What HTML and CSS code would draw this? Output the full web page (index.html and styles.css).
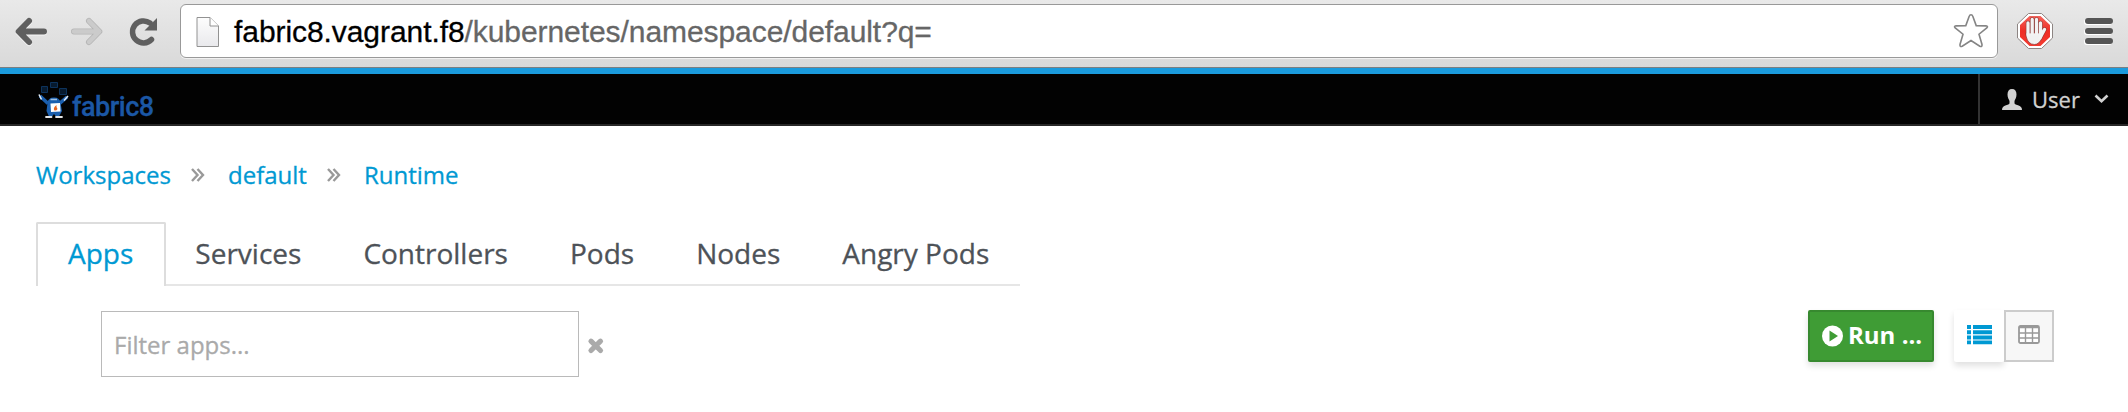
FILE: index.html
```html
<!DOCTYPE html>
<html lang="en">
<head>
<meta charset="utf-8">
<title>fabric8</title>
<link rel="stylesheet" href="styles.css">
</head>
<body>
<div class="browser">
  <svg class="nav-icons" width="180" height="67" viewBox="0 0 180 67" fill="none" stroke-linecap="round" stroke-linejoin="round">
    <path d="M44 31.500H20M29 21 18.700 31.500 29 42" stroke="#f7f7f7" stroke-width="6" transform="translate(0 1)"/>
    <path d="M44 31.500H20M29 21 18.700 31.500 29 42" stroke="#5f5f5f" stroke-width="6"/>
    <path d="M74 31.500H98M89 21 99.300 31.500 89 42" stroke="#b5b5b5" stroke-width="6"/>
    <path d="M74 31.500H98M89 21 99.300 31.500 89 42" stroke="#cbcbcb" stroke-width="4.500"/>
    <path d="M151.500 39.500A11 11 0 1 1 150 23" stroke="#5f5f5f" stroke-width="5.500"/>
    <path d="M157 18V30.500H144.500Z" fill="#5f5f5f"/>
  </svg>
  <div class="omnibox">
    <svg class="page-icon" width="24" height="32" viewBox="0 0 24 32">
      <defs><linearGradient id="paper" x2="0" y2="1"><stop stop-color="#fdfdfd"/><stop offset="1" stop-color="#e9e9ec"/></linearGradient></defs>
      <path d="M1 1.500H14L22.500 10V30.500H1Z" fill="url(#paper)" stroke="#929292"/>
      <path d="M14 1.500V10H22.500" fill="#fff" stroke="#929292"/>
    </svg>
    <div class="url"><span class="host">fabric8.vagrant.f8</span><span class="path">/kubernetes/namespace/default?q=</span></div>
    <svg class="star" width="36" height="36" viewBox="0 0 36 36"><path d="M18 1.800Q19.300 1.800 19.700 3L23.200 12.600 33 12.900Q35.500 13.200 33.800 15L26 21.200 29 31.500Q29.300 34.300 26.800 33.200L18 27.500 9.200 33.200Q6.700 34.300 7 31.500L10 21.200 2.200 15Q.5 13.200 3 12.900L12.800 12.600 16.300 3Q16.700 1.800 18 1.800Z" fill="#fff" stroke="#858585" stroke-width="1.600"/></svg>
  </div>
  <svg class="ext-icons" width="130" height="67" viewBox="0 0 130 67">
    <defs><linearGradient id="red" x2="0" y2="1"><stop stop-color="#f4645c"/><stop offset=".5" stop-color="#ee2d24"/><stop offset="1" stop-color="#f43b31"/></linearGradient></defs>
    <path d="M30.500 13.500H43.500L54.500 24V38L43.500 48.500H30.500L19.500 38V24Z" fill="#fff" stroke="#8d8583"/>
    <path d="M31.500 16H42.500L52 25V37L42.500 46H31.500L22 37V25Z" fill="url(#red)"/>
    <g fill="none" stroke-linecap="round" stroke-linejoin="round">
      <path id="hand" d="M30 35V23M34.200 32V19.500M38.500 32V19.500M42.500 34V23M46.500 29.500 42 38" stroke="#8b3430" stroke-width="4.400"/>
      <path d="M28.300 33H44.500L44 38Q41 44.500 36.500 44.500 30 44.500 28.300 37Z" fill="#f1f1f1" stroke="#8b3430" stroke-width=".7"/>
      <path d="M30 35V23M34.200 34V19.500M38.500 34V19.500M42.500 35V23M46.500 29.500 42 38" stroke="#f3f3f3" stroke-width="3.300"/>
    </g>
    <path d="M89 22H111M89 32H111M89 42H111" stroke="#fff" stroke-width="6" stroke-linecap="round"/>
    <path d="M90 21H112M90 31H112M90 41H112" stroke="#555" stroke-width="6" stroke-linecap="round"/>
  </svg>
</div>
<header class="navbar">
  <div class="brand">
    <svg width="36" height="40" viewBox="0 0 36 40">
      <g fill="#071a2e" stroke="#0d335c"><path d="M5.500 6.500h6v6h-6zM14.500 2.500h7v5h-7zM23.500 8.500h7v6h-7z"/></g>
      <path d="M4 16 12 23.500M31 17 23 24" stroke="#1b5fae" stroke-width="3.600"/>
      <path d="M3 14.500 5.500 19.500M32 16 28 20.500" stroke="#dfeaf5" stroke-width="1.600"/>
      <path d="M11.500 23Q12 17.500 18 17.500T24.500 23L26 31 23 36.500H20L18 34 16 36.500H13L10.500 31Z" fill="#1b5fae"/>
      <path d="M14.500 19.500H21" stroke="#9fc0e2" stroke-width="1.500"/>
      <path d="M14.500 23.500 24 23 24.500 31.500 15 32Z" fill="#fff"/><path d="M18.500 30.500Q16.500 28 20.500 25 20 27 21.500 29 20.500 31 18.500 30.500Z" fill="#e8651f"/>
      <path d="M10 37H15.500M20 37H26" stroke="#e6e6e6" stroke-width="1.800" stroke-linecap="round"/>
    </svg>
    <span class="brand-name">fabric8</span>
  </div>
  <div class="user">
    <svg width="22" height="22" viewBox="0 0 22 22" fill="#d1d1d1"><path d="M11 0C14 0 15.500 2 15.500 5.500 15.500 9 14 10.500 13.500 12V14.500Q14 15.500 17 16.300 21 17.500 21 21H1Q1 17.500 5 16.300 8 15.500 8.500 14.500V12C8 10.500 6.500 9 6.500 5.500 6.500 2 8 0 11 0Z"/></svg>
    <span class="user-name">User</span>
    <svg width="15" height="10" viewBox="0 0 15 10"><path d="M1.500 1.500 7.500 7.300 13.500 1.500" fill="none" stroke="#d1d1d1" stroke-width="2.600"/></svg>
  </div>
</header>
<main>
  <nav class="crumbs">
    <a class="c1">Workspaces</a>
    <svg class="sep" width="14" height="14" viewBox="0 0 14 14"><path d="M1 1 6.500 7 1 13M6.500 1 12 7 6.500 13" fill="none" stroke="#999" stroke-width="2.400"/></svg>
    <a class="c2">default</a>
    <svg class="sep" width="14" height="14" viewBox="0 0 14 14"><path d="M1 1 6.500 7 1 13M6.500 1 12 7 6.500 13" fill="none" stroke="#999" stroke-width="2.400"/></svg>
    <a class="c3">Runtime</a>
  </nav>
  <nav class="tabs">
    <a class="tab active">Apps</a><a class="tab second">Services</a><a class="tab">Controllers</a><a class="tab">Pods</a><a class="tab">Nodes</a><a class="tab">Angry Pods</a>
  </nav>
  <div class="tools">
    <div class="filter">Filter apps...</div>
    <svg class="clear" width="18" height="18" viewBox="0 0 18 18"><path d="M4 4.200 13.500 13.500M13.500 4.200 4 13.500" stroke="#aaa" stroke-width="5.200" stroke-linecap="round"/></svg>
    <div class="run">
      <svg width="22" height="22" viewBox="0 0 22 22"><circle cx="10.500" cy="11" r="10.500" fill="#fff"/><path d="M7.500 5.500 16 11 7.500 16.500Z" fill="#3f9c35"/></svg>
      <span class="run-label">Run ...</span>
    </div>
    <div class="views">
      <div class="view on"><svg width="25" height="20" viewBox="0 0 25 20" fill="#0099d3"><path d="M0 0h4v4H0zM6 0h19v4H6zM0 5.200h4v4H0zM6 5.200h19v4H6zM0 10.400h4v4H0zM6 10.400h19v4H6zM0 15.600h4v3.600H0zM6 15.600h19v3.600H6z"/></svg></div>
      <div class="view off"><svg width="22" height="19" viewBox="0 0 22 19"><rect x="1" y="1" width="20" height="17" rx="1.500" fill="#fff" stroke="#999" stroke-width="1.800"/><path d="M1 2.500H21M1 8H21M1 13H21M7.500 2V18M14.500 2V18" stroke="#999" stroke-width="1.400"/></svg></div>
    </div>
  </div>
</main>
</body>
</html>
```
FILE: styles.css
```css
* { box-sizing: border-box; }
body { margin: 0; height: 412px; overflow: hidden; background: #fff; font-family: "Open Sans", sans-serif; -webkit-text-stroke: .3px currentColor; }
svg { display: block; flex: none; }
.browser { display: flex; height: 68px; background: linear-gradient(#e9e9e9, #d9d9d9); border-bottom: 1px solid #7b7f82; }
.omnibox { display: flex; align-items: flex-start; width: 1818px; height: 54px; margin-top: 4px; padding: 11px 8px 0 15px; background: #fff; border: 1px solid #999; border-radius: 6px; box-shadow: 0 1px 0 #f1f1f1; }
.page-icon { width: 24px; }
.url { flex: 1; margin-left: 14px; margin-top: -2px; font: 30px/36px "Liberation Sans", Arial, sans-serif; letter-spacing: -.07px; white-space: nowrap; color: #666; }
.host { color: #000; }
.star { margin-top: -3px; }
.navbar { display: flex; justify-content: space-between; height: 58px; background: #020202; border-top: 6px solid #1b9bdd; border-bottom: 2px solid #272727; }
.brand { display: flex; padding: 6px 0 0 36px; }
.brand-name { padding-top: 9px; font: 500 27px/36px Roboto, sans-serif; letter-spacing: -.5px; color: #1b57a5; }
.user { display: flex; width: 150px; padding: 0 0 0 21px; border-left: 2px solid #333; color: #d1d1d1; }
.user svg { margin-top: 15px; }
.user-name { width: 62px; margin-left: 9px; font-size: 22px; line-height: 51px; }
.user .user-name + svg { margin-top: 20px; }
main { padding: 32px 74px 0 36px; }
.crumbs { display: flex; align-items: center; height: 34px; font-size: 24px; line-height: 34px; color: #0099d3; }
.c1 { width: 155px; }
.c2, .c3 { margin-left: 23px; }
.c2 { width: 99px; }
.tabs { display: flex; width: 985px; height: 64px; margin-top: 30px; }
.tabs { width: 949px; }
.tab { padding: 0 31px; border-bottom: 2px solid #e6e6e6; font-size: 28px; line-height: 62px; color: #4d5258; white-space: nowrap; }
.tab:last-child { flex: 1; }
.tab.active { padding: 0 31px 0 30px; line-height: 58px; border: 2px solid #ddd; border-bottom: 0; border-radius: 2px 2px 0 0; color: #0099d3; }
.tab.second { padding-left: 29px; }
.tools { display: flex; align-items: flex-start; margin-top: 24px; padding-left: 65px; }
.filter { width: 478px; height: 66px; margin-top: 1px; padding-left: 12px; border: 1px solid #bababa; font-size: 24px; line-height: 65px; color: #aaa; }
.clear { margin: 27px 0 0 8px; }
.run { display: flex; width: 126px; height: 52px; margin-left: auto; padding: 13px 0 0 12px; background: #3f9c35; border: 2px solid #37892f; border-radius: 2px; box-shadow: 0 4px 6px rgba(3,3,3,.12); color: #fff; }
.run-label { margin-left: 4px; font-size: 24px; font-weight: 700; line-height: 20px; white-space: nowrap; -webkit-text-stroke: 0; }
.views { display: flex; margin-left: 20px; }
.view { width: 50px; height: 52px; }
.on { padding: 15px 0 0 13px; border-radius: 2px; box-shadow: 0 4px 6px rgba(3,3,3,.12); }
.off { padding: 13px 0 0 12px; background: #f7f7f7; border: 2px solid #ccc; position: relative; }
```
